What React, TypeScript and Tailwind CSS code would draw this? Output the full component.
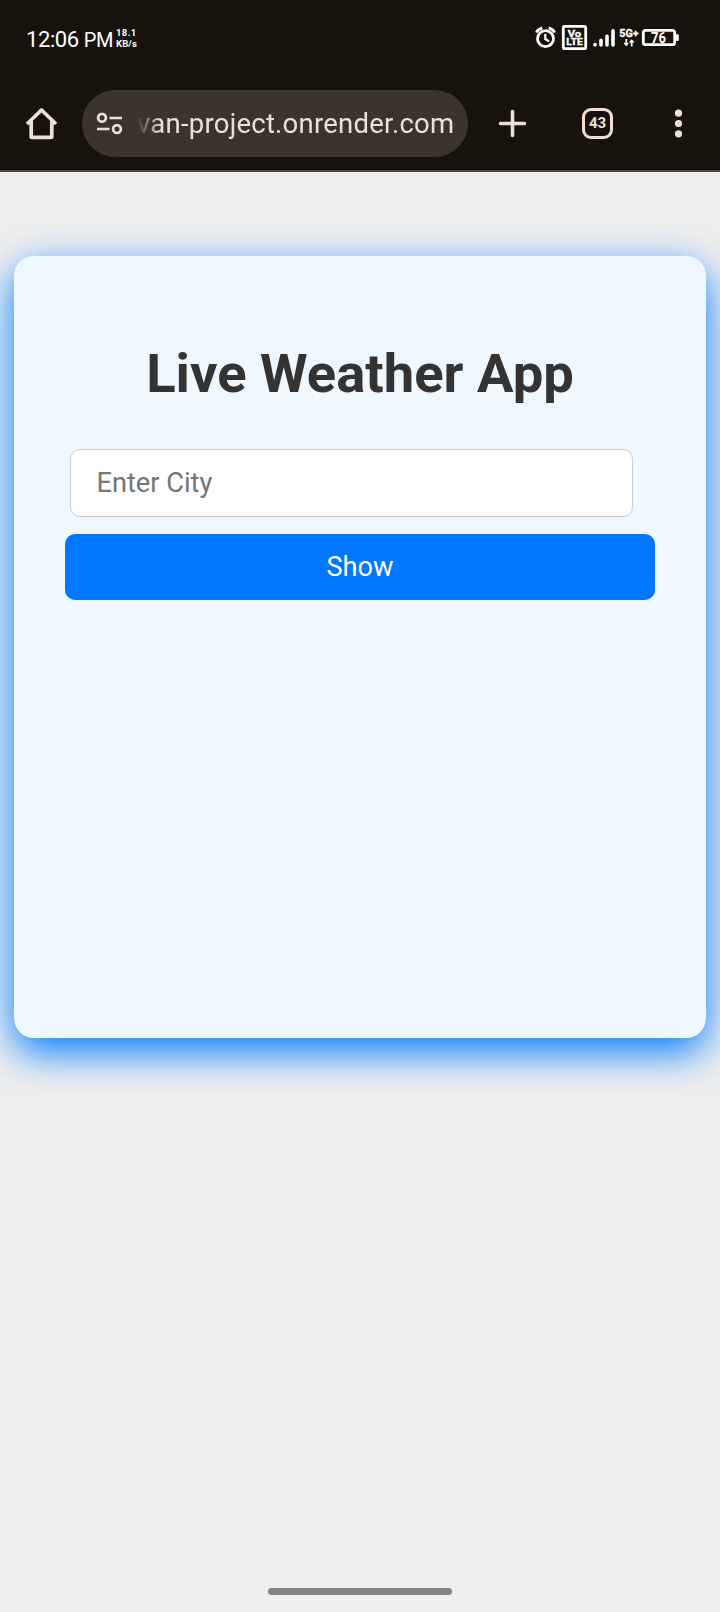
function StatusBar() {
  return (
    <div className="flex h-20 items-start justify-between pl-[26px] pr-[40px] text-white">
      <div className="flex pt-[26px]">
        <span className="w-[84px] whitespace-nowrap text-[22px] leading-[28px] tracking-[-0.4px]">
          12:06 <span className="text-[20px] tracking-[-0.5px]">PM</span>
        </span>
        <div className="ml-[6px] flex flex-col pt-[1px] text-[9.5px] font-bold leading-[11px]">
          <span className="tracking-[0.4px]">18.1</span>
          <span className="tracking-[0.1px]">KB/s</span>
        </div>
      </div>
      <svg className="mt-[24px]" width="146" height="28" viewBox="534 24 146 28" fill="none" stroke="white">
        <circle cx="545.5" cy="38.7" r="8" strokeWidth="2.8" />
        <path d="M545.3 34v5l3.7 2.2" strokeWidth="2.2" />
        <path d="M536.3 32.5q1.7-3.3 6-4.6M554.7 32.5q-1.7-3.3-6-4.6" strokeWidth="2.7" />
        <rect x="563.3" y="26.3" width="22.4" height="22.4" rx="1.5" strokeWidth="2.8" />
        <g fill="white" strokeWidth="0.3" fontFamily="Roboto, sans-serif" fontWeight="700">
          <text x="574.5" y="36.5" fontSize="9.5" textAnchor="middle" textLength="13.5" lengthAdjust="spacingAndGlyphs">Vo</text>
          <text x="574.5" y="45.4" fontSize="8.8" textAnchor="middle" textLength="16.5" lengthAdjust="spacingAndGlyphs">LTE</text>
          <text x="619.3" y="37" fontSize="10.5" textLength="13.5" lengthAdjust="spacingAndGlyphs">5G</text>
          <text x="658.5" y="42.7" fontSize="14" textAnchor="middle" textLength="15" lengthAdjust="spacingAndGlyphs" strokeWidth="0">76</text>
        </g>
        <path d="M595 44.6v.4M601 40.3v4.700M607 36.300v8.700M613 30.900v14.100" strokeWidth="3.6" strokeLinecap="round" />
        <path d="M633 33.5h5.5M635.7 30.7v5.6" strokeWidth="1.8" />
        <path d="M626.3 39v6M624.3 43l2 2 2-2M631.7 46.5v-6M629.7 42.500l2-2 2 2" strokeWidth="1.7" />
        <rect x="643.3" y="30.3" width="31.4" height="14.4" rx="2.5" strokeWidth="2.8" />
        <path d="M677.3 35.5v4" strokeWidth="3" strokeLinecap="round" />
      </svg>
    </div>
  );
}

function BrowserBar() {
  return (
    <div className="flex h-[90px] items-start pl-[25px] pt-[10px] text-[#efdfd5]">
      <svg className="mt-[17px]" width="33" height="33" viewBox="25 107 33 33" fill="none" stroke="currentColor" strokeWidth="3.7" strokeLinejoin="round">
        <path d="M27 124l14.500-14 14.500 14M31.200 121v15.500q0 .8.800.8h19q.8 0 .8-.8V121" />
      </svg>
      <div className="ml-[24px] flex h-[67px] w-[386px] items-center rounded-full bg-[#3c332e] pl-[14px]">
        <svg width="28" height="24" viewBox="96 112 28 24" fill="none" stroke="currentColor" strokeWidth="2.7">
          <circle cx="102" cy="117.8" r="3.9" />
          <circle cx="117" cy="129" r="3.9" />
          <path d="M109.500 118h12.500M97 129h12.500" />
        </svg>
        <span className="ml-[13px] whitespace-nowrap text-[27.5px] leading-[40px] tracking-[0.23px] [mask-image:linear-gradient(to_right,transparent,black_24px)]">
          van-project.onrender.com
        </span>
      </div>
      <svg className="ml-[30px] mt-[19px]" width="29" height="29" viewBox="0 0 29 29" stroke="currentColor" strokeWidth="3.6" strokeLinecap="round">
        <path d="M14.500 2.500v24M2.500 14.500h24" />
      </svg>
      <div className="ml-[55px] mt-[18px] flex h-[31px] w-[31px] items-center justify-center rounded-[9px] border-[3px] border-[#efdfd5] text-[15px] font-bold leading-none">
        43
      </div>
      <svg className="ml-[60px] mt-[17px]" width="12" height="33" viewBox="0 0 12 33" fill="currentColor">
        <circle cx="5.5" cy="6.2" r="3.6" />
        <circle cx="5.5" cy="16.5" r="3.6" />
        <circle cx="5.5" cy="26.8" r="3.6" />
      </svg>
    </div>
  );
}

export default function App() {
  return (
    <div className="flex h-[1612px] w-[720px] flex-col overflow-hidden bg-[#efefef] font-[Roboto,sans-serif]">
      <header className="h-[172px] shrink-0 border-b-2 border-[#51443b] bg-[#17130c]">
        <StatusBar />
        <BrowserBar />
      </header>
      <main className="mx-[14px] mt-[84px] flex h-[782px] flex-col rounded-[20px] bg-[#eff7ff] px-[51px] pt-[82px] shadow-[0_14px_41px_#007bff]">
        <h1 className="text-center text-[54.4px] font-bold leading-[72px] text-[#333333]">Live Weather App</h1>
        <input
          placeholder="Enter City"
          className="ml-[5px] mt-[39px] h-[68px] w-[563px] rounded-[10px] border border-[#cccccc] bg-white px-[25.5px] text-[27.2px] placeholder:text-[#757575]"
        />
        <button className="mt-[17px] h-[66px] rounded-[10px] bg-[#0077ff] text-[27.2px] text-white">Show</button>
      </main>
      <div className="mb-[17px] mt-auto h-[7px] w-[184px] self-center rounded-full bg-[#838383]" />
    </div>
  );
}
